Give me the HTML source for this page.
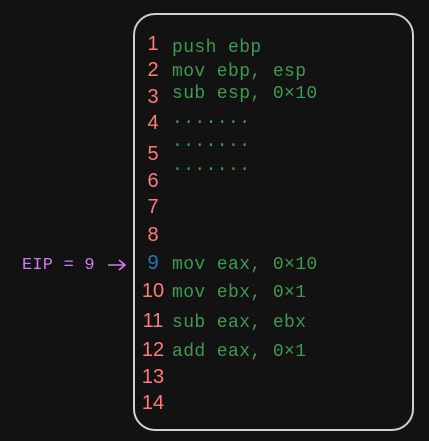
<!DOCTYPE html>
<html><head><style>
html,body{margin:0;padding:0;background:#121212;width:429px;height:441px;overflow:hidden;position:relative}
.box{position:absolute;left:133px;top:13px;width:277px;height:414px;border:2px solid #d0d0d0;border-radius:22px}
.n{position:absolute;font-family:"Liberation Sans",sans-serif;font-size:20px;color:#ff7a78;width:30px;text-align:center;left:138px;line-height:20px}
.c{position:absolute;left:172px;font-family:"Liberation Mono",monospace;font-size:18px;letter-spacing:0.4px;color:#3d9a4e;line-height:20px;white-space:pre}
.e{position:absolute;left:22px;top:256px;font-family:"Liberation Mono",monospace;font-size:17px;letter-spacing:0.2px;color:#cf7de6;line-height:20px;white-space:pre}
</style></head><body>
<div class="box"></div>
<div class="n" style="top:34px">1</div>
<div class="n" style="top:60px">2</div>
<div class="n" style="top:87px">3</div>
<div class="n" style="top:113px">4</div>
<div class="n" style="top:144px">5</div>
<div class="n" style="top:171px">6</div>
<div class="n" style="top:197px">7</div>
<div class="n" style="top:225px">8</div>
<div class="n" style="top:253px;color:#2a74b8">9</div>
<div class="n" style="top:281px">10</div>
<div class="n" style="top:311px">11</div>
<div class="n" style="top:340px">12</div>
<div class="n" style="top:367px">13</div>
<div class="n" style="top:393px">14</div>
<div class="c" style="top:38px">push ebp</div>
<div class="c" style="top:62px">mov ebp, esp</div>
<div class="c" style="top:84px">sub esp, 0×10</div>
<div class="c" style="top:109px">.......</div>
<div class="c" style="top:132px">.......</div>
<div class="c" style="top:156px">.......</div>
<div class="c" style="top:255px">mov eax, 0×10</div>
<div class="c" style="top:283px">mov ebx, 0×1</div>
<div class="c" style="top:313px">sub eax, ebx</div>
<div class="c" style="top:342px">add eax, 0×1</div>
<div class="e">EIP = 9</div>
<svg style="position:absolute;left:106px;top:257px" width="22" height="16"><path d="M2 8 H19 M13 3 L19 8 L13 13" stroke="#cf7de6" stroke-width="1.6" fill="none"/></svg>
</body></html>
